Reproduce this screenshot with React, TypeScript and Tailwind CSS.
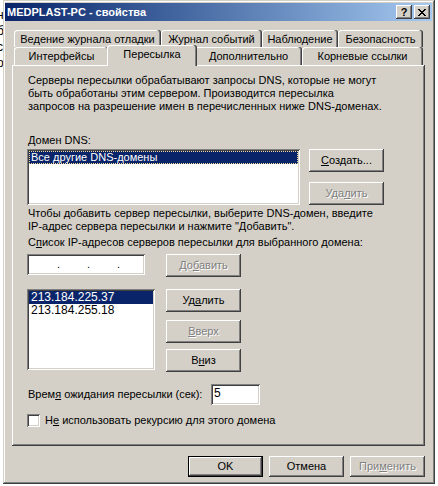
import type { ReactNode } from "react";

const raised =
  "shadow-[inset_-1px_-1px_0_#404040,inset_1px_1px_0_#ffffff,inset_-2px_-2px_0_#808080,inset_2px_2px_0_#d4d0c8]";
const defaultRaised =
  "shadow-[inset_0_0_0_1px_#000000,inset_-2px_-2px_0_#404040,inset_2px_2px_0_#ffffff,inset_-3px_-3px_0_#808080]";
const sunken =
  "shadow-[inset_1px_1px_0_#808080,inset_-1px_-1px_0_#ffffff,inset_2px_2px_0_#404040,inset_-2px_-2px_0_#d4d0c8]";
const tabEdge =
  "shadow-[inset_-1px_0_0_#404040,inset_-2px_0_0_#808080,inset_1px_1px_0_#ffffff]";

function Button({
  children,
  width = "w-[75px]",
  height = "h-[23px]",
  disabled,
  isDefault,
}: {
  children: ReactNode;
  width?: string;
  height?: string;
  disabled?: boolean;
  isDefault?: boolean;
}) {
  return (
    <div
      className={`flex ${width} ${height} shrink-0 items-center justify-center bg-[#d4d0c8] ${
        isDefault ? defaultRaised : raised
      } ${disabled ? "text-[#808080] [text-shadow:1px_1px_0_#ffffff]" : "text-black"}`}
    >
      {children}
    </div>
  );
}

function Tab({ label, width, selected }: { label: string; width: string; selected?: boolean }) {
  if (selected) {
    return (
      <div
        className={`relative z-10 -mx-[2px] -mt-[2px] h-[21px] ${width} shrink-0 rounded-t-[3px] bg-[#d4d0c8] pt-[3px] text-center ${tabEdge}`}
      >
        {label}
      </div>
    );
  }
  return (
    <div className={`h-full ${width} shrink-0 rounded-t-[3px] bg-[#d4d0c8] pt-[3px] text-center ${tabEdge}`}>
      {label}
    </div>
  );
}

function TitleBar() {
  return (
    <div className="flex h-[18px] items-center bg-linear-to-r from-[#0a246a] to-[#a6caf0] pr-[2px] pl-[2px]">
      <span className="text-[11px] font-bold text-white">MEDPLAST-PC - свойства</span>
      <div className="ml-auto flex gap-[2px]">
        <div className={`flex h-[14px] w-[16px] items-center justify-center bg-[#d4d0c8] text-[11px] leading-[14px] font-bold ${raised}`}>
          ?
        </div>
        <div className={`flex h-[14px] w-[16px] items-center justify-center bg-[#d4d0c8] ${raised}`}>
          <svg width="8" height="7" viewBox="0 0 8 7" shapeRendering="crispEdges">
            <path d="M0 0h2v1h-2zM6 0h2v1h-2zM1 1h2v1h-2zM5 1h2v1h-2zM2 2h4v1h-4zM3 3h2v1h-2zM2 4h4v1h-4zM1 5h2v1h-2zM5 5h2v1h-2zM0 6h2v1h-2zM6 6h2v1h-2z" fill="#000" />
          </svg>
        </div>
      </div>
    </div>
  );
}

function BackgroundStrip() {
  return (
    <div className="w-[3px] shrink-0 overflow-hidden bg-white pt-[7px] text-[12px] leading-[16px]">
      <div className="-ml-[3px] flex flex-col">
        <span>н</span>
        <span>б</span>
        <span>с</span>
        <span>о</span>
      </div>
    </div>
  );
}

function IpField() {
  return (
    <div className={`flex h-[21px] w-[118px] shrink-0 items-center bg-white pl-[2px] ${sunken}`}>
      <span className="w-[28px]" />
      <span className="w-[3px]">.</span>
      <span className="w-[27px]" />
      <span className="w-[3px]">.</span>
      <span className="w-[27px]" />
      <span className="w-[3px]">.</span>
    </div>
  );
}

export default function App() {
  return (
    <div className="flex h-[486px] w-[438px] overflow-hidden bg-white font-['Liberation_Sans',Arial,sans-serif] text-[11px] leading-[13px] text-black">
      <BackgroundStrip />
      <div className="flex h-[484px] w-[432px] shrink-0 flex-col bg-[#d4d0c8] pt-[3px] pr-[3px] pb-[3px] pl-[2px] shadow-[inset_-1px_-1px_0_#404040,inset_1px_1px_0_#d4d0c8,inset_-2px_-2px_0_#808080,inset_2px_2px_0_#ffffff]">
        <TitleBar />

        <div className="mt-[9px] ml-[9px] flex h-[17px]">
          <Tab label="Ведение журнала отладки" width="w-[147px]" />
          <Tab label="Журнал событий" width="w-[101px]" />
          <Tab label="Наблюдение" width="w-[76px]" />
          <Tab label="Безопасность" width="w-[85px]" />
        </div>
        <div className="ml-[9px] flex h-[18px]">
          <Tab label="Интерфейсы" width="w-[95px]" />
          <Tab label="Пересылка" width="w-[90px]" selected />
          <Tab label="Дополнительно" width="w-[107px]" />
          <Tab label="Корневые ссылки" width="w-[121px]" />
        </div>

        <div className="ml-[7px] flex h-[381px] w-[413px] flex-col pt-[9px] pl-[15px] shadow-[inset_-1px_-1px_0_#404040,inset_1px_1px_0_#ffffff,inset_-2px_-2px_0_#808080]">
          <p className="pl-[1px]">
            Серверы пересылки обрабатывают запросы DNS, которые не могут
            <br />
            быть обработаны этим сервером. Производится пересылка
            <br />
            запросов на разрешение имен в перечисленных ниже DNS-доменах.
          </p>

          <p className="mt-[21px] pl-[1px]">
            <u>Д</u>омен DNS:
          </p>
          <div className="mt-[2px] flex">
            <div className={`h-[56px] w-[273px] shrink-0 bg-white p-[2px] ${sunken}`}>
              <div className="h-[13px] border border-dotted border-[#f5db95] bg-[#0a246a] pl-[1px] leading-[11px] text-white">
                Все другие DNS-домены
              </div>
            </div>
            <div className="ml-[9px] flex flex-col gap-[10px]">
              <Button>
                <span>
                  <u>С</u>оздать...
                </span>
              </Button>
              <Button disabled>
                <span>
                  Уда<u>л</u>ить
                </span>
              </Button>
            </div>
          </div>

          <p className="mt-[2px] pl-[1px]">
            Чтобы добавить сервер пересылки, выберите DNS-домен, введите
            <br />
            IP-адрес сервера пересылки и нажмите "Добавить".
          </p>
          <p className="mt-[3px] pl-[1px]">
            С<u>п</u>исок IP-адресов серверов пересылки для выбранного домена:
          </p>

          <div className="mt-[5px] flex items-start">
            <IpField />
            <div className="ml-[21px]">
              <Button disabled>
                <span>
                  До<u>б</u>авить
                </span>
              </Button>
            </div>
          </div>

          <div className="mt-[12px] flex items-start">
            <div className={`h-[81px] w-[128px] shrink-0 bg-white p-[2px] ${sunken}`}>
              <div className="h-[13px] bg-[#0a246a] pl-[2px] text-[12px] leading-[13px] text-white">213.184.225.37</div>
              <div className="h-[13px] pl-[2px] text-[12px] leading-[13px]">213.184.255.18</div>
            </div>
            <div className="ml-[11px] flex flex-col">
              <Button>
                <span>
                  Уд<u>а</u>лить
                </span>
              </Button>
              <div className="mt-[8px]">
                <Button disabled>
                  <span>
                    <u>В</u>верх
                  </span>
                </Button>
              </div>
              <div className="mt-[6px]">
                <Button>
                  <span>
                    В<u>н</u>из
                  </span>
                </Button>
              </div>
            </div>
          </div>

          <div className="mt-[12px] flex items-center">
            <span className="w-[184px] pl-[1px]">
              Врем<u>я</u> ожидания пересылки (сек):
            </span>
            <div className={`h-[21px] w-[49px] bg-white pt-[3px] pl-[3px] text-[12px] leading-[13px] ${sunken}`}>5</div>
          </div>

          <div className="mt-[9px] flex items-center">
            <div className={`h-[13px] w-[13px] shrink-0 bg-white ${sunken}`} />
            <span className="ml-[5px]">
              Н<u>е</u> использовать рекурсию для этого домена
            </span>
          </div>
        </div>

        <div className="mt-[10px] mr-[7px] flex justify-end gap-[6px]">
          <Button isDefault height="h-[21px]">
            OK
          </Button>
          <Button height="h-[21px]">Отмена</Button>
          <Button disabled height="h-[21px]">
            <span>
              При<u>м</u>енить
            </span>
          </Button>
        </div>
      </div>
    </div>
  );
}
